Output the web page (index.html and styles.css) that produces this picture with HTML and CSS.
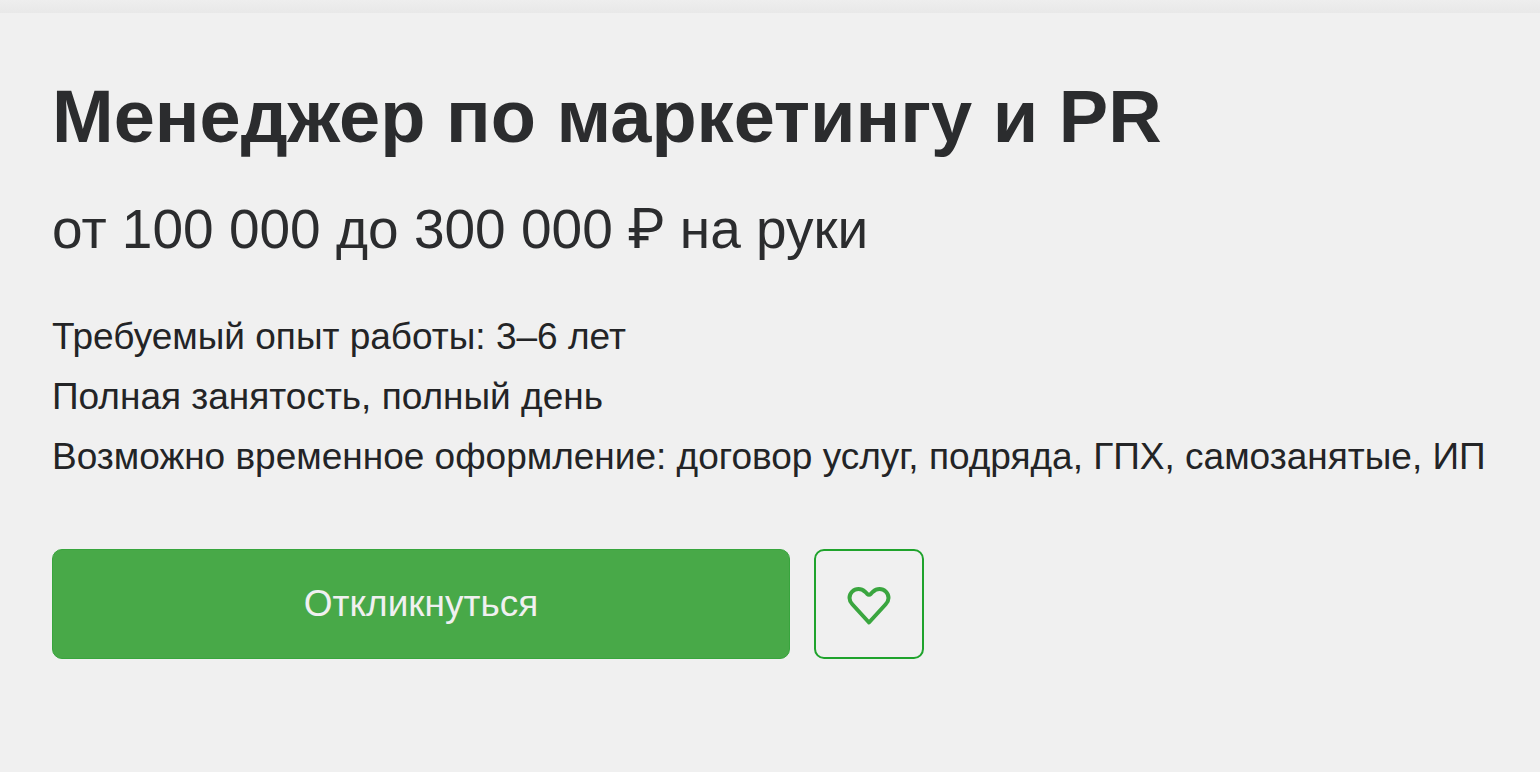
FILE: index.html
```html
<!DOCTYPE html>
<html lang="ru">
<head>
  <meta charset="UTF-8" />
  <meta name="viewport" content="width=device-width, initial-scale=1.0"/>
  <title>Менеджер по маркетингу и PR</title>
  <link rel="stylesheet" href="styles.css">
</head>
<body>

  <div class="top-shadow"></div>

  <main class="vacancy">
    <h1 class="title">Менеджер по маркетингу и PR</h1>
    <p class="salary">от 100 000 до 300 000 <span class="currency">₽</span> на руки</p>

    <div class="details">
      <p>Требуемый опыт работы: 3–6 лет</p>
      <p>Полная занятость, полный день</p>
      <p>Возможно временное оформление: договор услуг, подряда, ГПХ, самозанятые, ИП</p>
    </div>

    <div class="actions">
      <button class="respond" type="button">Откликнуться</button>
      <button class="favorite" type="button" aria-label="В избранное">
        <svg class="heart" viewBox="0 0 44 44" fill="none" stroke="currentColor" stroke-width="4" stroke-linejoin="round">
          <path d="M22 40.500 L5.500 22.500 C3.500 20.300 2.500 18.300 2.500 16 A9 9 0 0 1 11.500 7 C14 7 16 7.800 18 9.700 L20 11.700 Q22 13.600 24 11.700 L26 9.700 C28 7.800 30 7 32.500 7 A9 9 0 0 1 41.500 16 C41.500 18.300 40.500 20.300 38.500 22.500 Z"/>
        </svg>
      </button>
    </div>
  </main>

</body>
</html>
```

FILE: styles.css
```css
* {
  box-sizing: border-box;
}

body {
  margin: 0;
  font-family: "Liberation Sans", Arial, sans-serif;
  background: #f0f0f0;
  color: #2b2c2e;
}

h1, p {
  margin: 0;
}

.top-shadow {
  height: 13px;
  background: linear-gradient(to bottom, #eeeeee, #e8e8e8);
}

.vacancy {
  padding: 62px 52px;
}

.title {
  font-size: 74px;
  line-height: 84px;
}

.salary {
  margin-top: 32px;
  font-size: 55px;
  line-height: 76px;
}

.currency {
  font-family: Roboto, sans-serif;
  line-height: 1;
}

.details {
  margin-top: 40px;
  font-size: 37px;
  line-height: 60px;
  color: #232426;
}

.actions {
  display: flex;
  gap: 24px;
  margin-top: 62px;
}

button {
  height: 110px;
  padding: 0;
  border-radius: 10px;
  font-family: inherit;
  font-size: 37px;
  cursor: pointer;
}

.respond {
  width: 100%;
  max-width: 738px;
  background: #48a948;
  color: #f0f0f0;
  border: 1px solid #38a53d;
}

.favorite {
  display: flex;
  justify-content: center;
  align-items: center;
  flex: 0 0 110px;
  background: none;
  border: 2px solid #1fa32c;
  color: #3aa63f;
}

.heart {
  width: 44px;
  height: 44px;
}
```
